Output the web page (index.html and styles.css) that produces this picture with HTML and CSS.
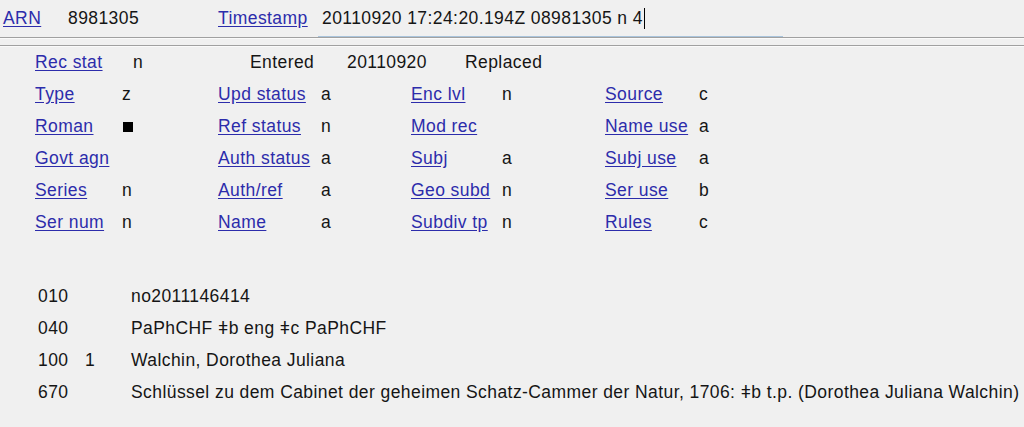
FILE: index.html
```html
<!DOCTYPE html>
<html lang="en">
<head>
    <meta charset="UTF-8">
    <title>Authority Record 8981305</title>
    <link rel="stylesheet" href="styles.css">
</head>
<body>
    <div class="record-header">
        <a href="#" class="label arn-label">ARN</a>
        <span class="arn-value">8981305</span>
        <a href="#" class="label ts-label">Timestamp</a>
        <div class="ts-input">20110920 17:24:20.194Z 08981305 n 4<span class="caret"></span></div>
    </div>
    <div class="rule"></div>
    <div class="rule rule-second"></div>

    <div class="rec-stat-row">
        <a href="#" class="label">Rec stat</a>
        <span class="rs-value">n</span>
        <span class="rs-entered">Entered</span>
        <span class="rs-date">20110920</span>
        <span>Replaced</span>
    </div>

    <div class="fixed-fields">
        <a href="#" class="label">Type</a><span>z</span>
        <a href="#" class="label">Upd status</a><span>a</span>
        <a href="#" class="label">Enc lvl</a><span>n</span>
        <a href="#" class="label">Source</a><span>c</span>

        <a href="#" class="label">Roman</a><span class="blank"></span>
        <a href="#" class="label">Ref status</a><span>n</span>
        <a href="#" class="label">Mod rec</a><span></span>
        <a href="#" class="label">Name use</a><span>a</span>

        <a href="#" class="label">Govt agn</a><span></span>
        <a href="#" class="label">Auth status</a><span>a</span>
        <a href="#" class="label">Subj</a><span>a</span>
        <a href="#" class="label">Subj use</a><span>a</span>

        <a href="#" class="label">Series</a><span>n</span>
        <a href="#" class="label">Auth/ref</a><span>a</span>
        <a href="#" class="label">Geo subd</a><span>n</span>
        <a href="#" class="label">Ser use</a><span>b</span>

        <a href="#" class="label">Ser num</a><span>n</span>
        <a href="#" class="label">Name</a><span>a</span>
        <a href="#" class="label">Subdiv tp</a><span>n</span>
        <a href="#" class="label">Rules</a><span>c</span>
    </div>

    <div class="var-fields">
        <div class="field"><span class="tag">010</span><span class="ind"></span><span class="data">no2011146414</span></div>
        <div class="field"><span class="tag">040</span><span class="ind"></span><span class="data">PaPhCHF ǂb eng ǂc PaPhCHF</span></div>
        <div class="field"><span class="tag">100</span><span class="ind">1</span><span class="data">Walchin, Dorothea Juliana</span></div>
        <div class="field"><span class="tag">670</span><span class="ind"></span><span class="data">Schlüssel zu dem Cabinet der geheimen Schatz-Cammer der Natur, 1706: ǂb t.p. (Dorothea Juliana Walchin)</span></div>
    </div>
</body>
</html>
```

FILE: styles.css
```css
* {
    margin: 0;
    padding: 0;
    box-sizing: border-box;
}

body {
    background-color: #f0f0f0;
    color: #151515;
    font-family: 'Liberation Sans', Arial, sans-serif;
    font-size: 17.5px;
    letter-spacing: 0.42px;
    overflow: hidden;
}

.label {
    color: #2c2cab;
    text-decoration: underline;
    text-underline-offset: 2px;
}

/* header line */
.record-header {
    display: flex;
    align-items: center;
    height: 37px;
}

.arn-label {
    width: 68px;
    padding-left: 3px;
}

.arn-value {
    width: 150px;
}

.ts-label {
    width: 100px;
}

.ts-input {
    align-self: stretch;
    display: flex;
    align-items: center;
    width: 465px;
    padding-left: 4px;
    border-bottom: 1px solid #a9c4dc;
}

.caret {
    display: inline-block;
    width: 1px;
    height: 21px;
    margin-left: 1px;
    background-color: #000;
}

.rule {
    height: 2px;
    border-top: 1px solid #a0a0a0;
    border-bottom: 1px solid #fafafa;
}

.rule-second {
    margin-top: 6px;
}

/* fixed fields */
.rec-stat-row {
    display: flex;
    align-items: center;
    height: 31px;
    padding-left: 35px;
}

.rec-stat-row .label {
    width: 98px;
}

.rs-value {
    width: 117px;
}

.rs-entered {
    width: 97px;
}

.rs-date {
    width: 118px;
}

.fixed-fields {
    display: grid;
    grid-template-columns: 87px 96px 103px 90px 91px 103px 94px 60px;
    grid-auto-rows: 32px;
    align-items: center;
    padding-left: 35px;
}

.blank::before {
    content: "";
    display: inline-block;
    width: 10px;
    height: 10px;
    margin-left: 1px;
    background-color: #000;
    vertical-align: middle;
}

/* variable fields */
.var-fields {
    margin-top: 42px;
    padding-left: 38px;
}

.field {
    display: flex;
    align-items: center;
    height: 32px;
    white-space: nowrap;
}

.tag {
    width: 47px;
}

.ind {
    width: 46px;
}
```
